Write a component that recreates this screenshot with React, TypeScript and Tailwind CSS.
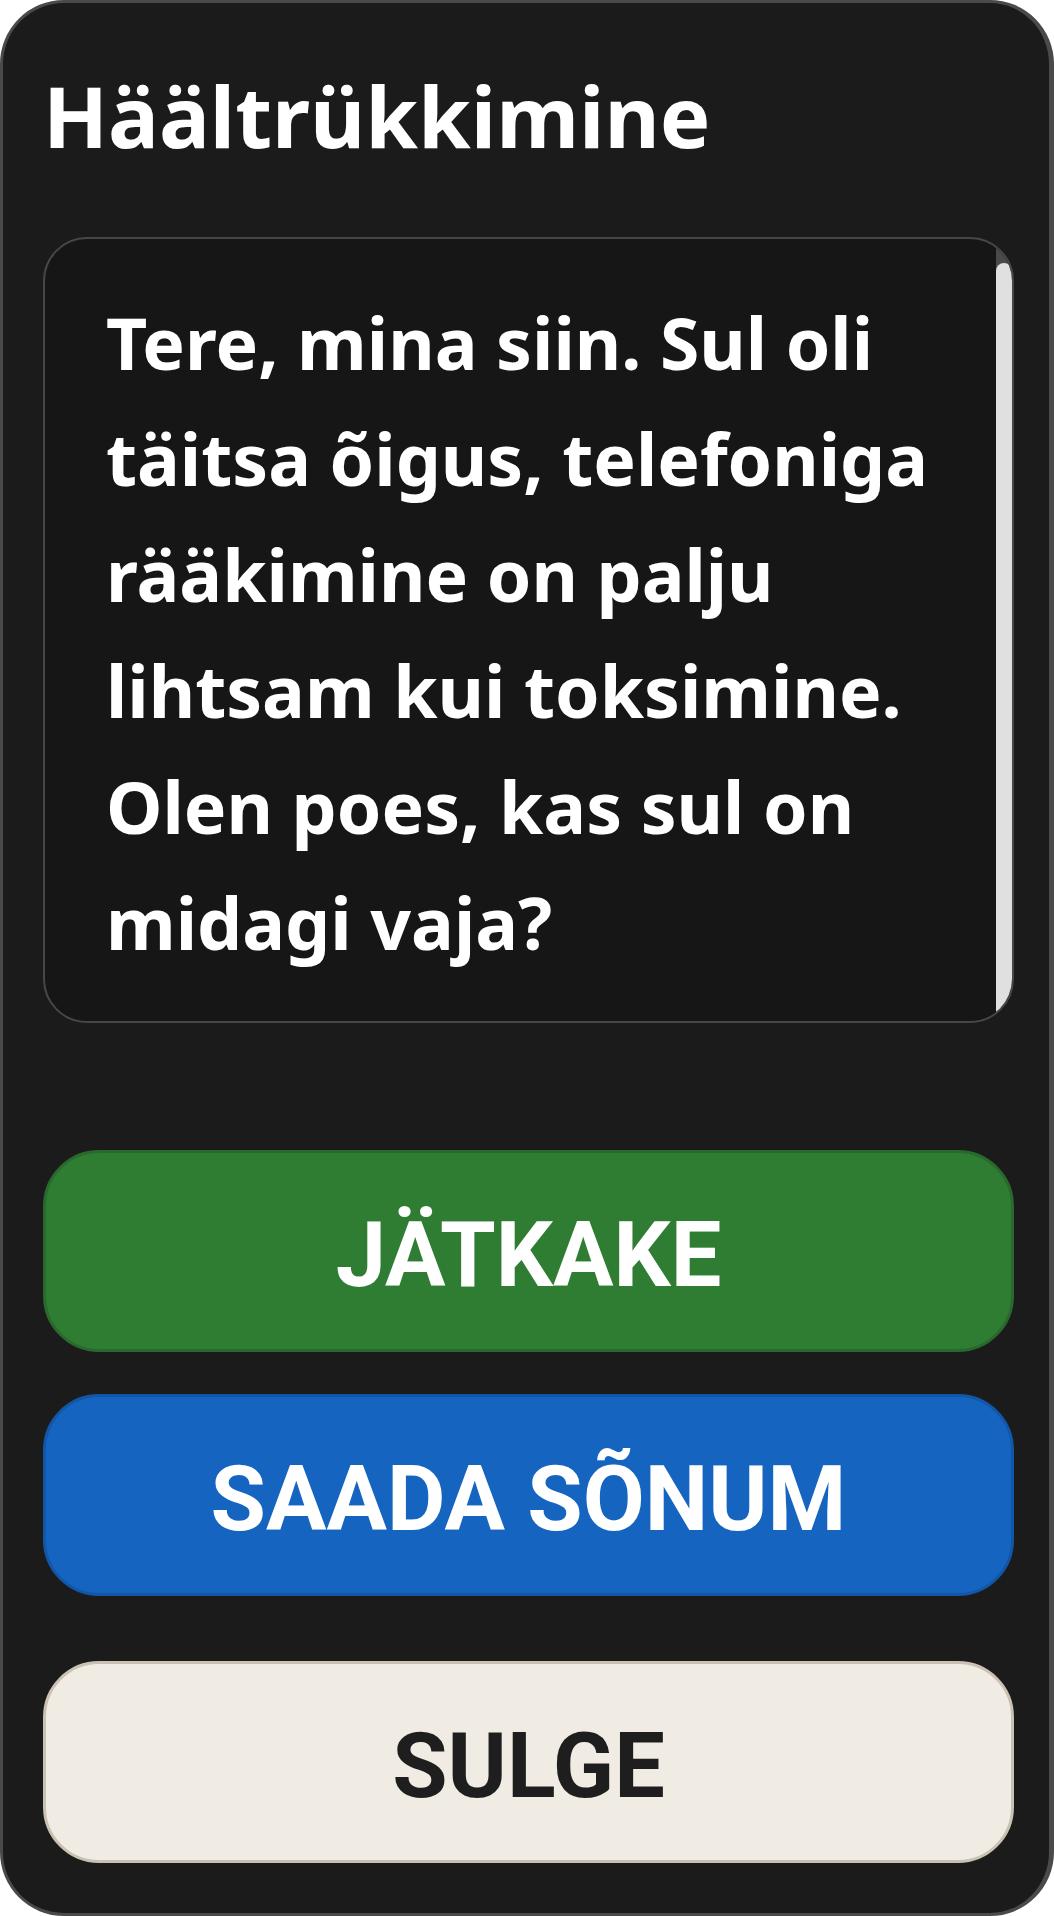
import React from 'react';

export default function App() {
  return (
    <div className="w-[1054px] h-[1916px] bg-[#1b1b1b] border-[3px] border-r-[5px] border-[#4a4a4a] rounded-[64px] pl-[40px] pr-[35px] pt-[70px] flex flex-col text-white font-['Noto_Sans',sans-serif] select-none overflow-hidden">
      {/* title */}
      <h1 className="text-[85px] leading-none font-bold">Häältrükkimine</h1>

      {/* transcribed text */}
      <div className="relative mt-[79px] h-[786px] rounded-[44px] border-2 border-[#474747] bg-[#161616] overflow-hidden">
        <div className="h-full overflow-hidden pl-[61px] pr-[77px] pt-[46px] pb-[48px]">
          <p className="text-[71.5px] leading-[116px] font-bold">
            Tere, mina siin. Sul oli täitsa õigus, telefoniga rääkimine on palju lihtsam kui toksimine. Olen poes, kas sul on midagi vaja?
          </p>
        </div>
        {/* scrollbar */}
        <div className="absolute right-0 top-0 bottom-0 w-4">
          <div className="absolute inset-x-0 top-0 h-[32px] bg-[#4a4a4a]" />
          <div className="absolute inset-x-0 top-[24px] bottom-0 rounded-t-full bg-[#e0e0e0]" />
        </div>
      </div>

      {/* actions */}
      <button className="mt-[127px] h-[202px] rounded-[56px] border-[3px] border-[#29692d] bg-[#2e7d32] text-white text-[90px] font-bold font-['Roboto',sans-serif] pt-2 flex items-center justify-center">
        JÄTKAKE
      </button>
      <button className="mt-[42px] h-[202px] rounded-[56px] border-[3px] border-[#1256a8] bg-[#1565c0] text-white text-[90px] font-bold font-['Roboto',sans-serif] pt-2 flex items-center justify-center">
        SAADA SÕNUM
      </button>
      <button className="mt-[65px] h-[202px] rounded-[56px] border-[3px] border-[#c9c1b2] bg-[#f0ebe3] text-[#1e1e1e] text-[90px] font-bold font-['Roboto',sans-serif] pt-2 flex items-center justify-center">
        SULGE
      </button>
    </div>
  );
}
